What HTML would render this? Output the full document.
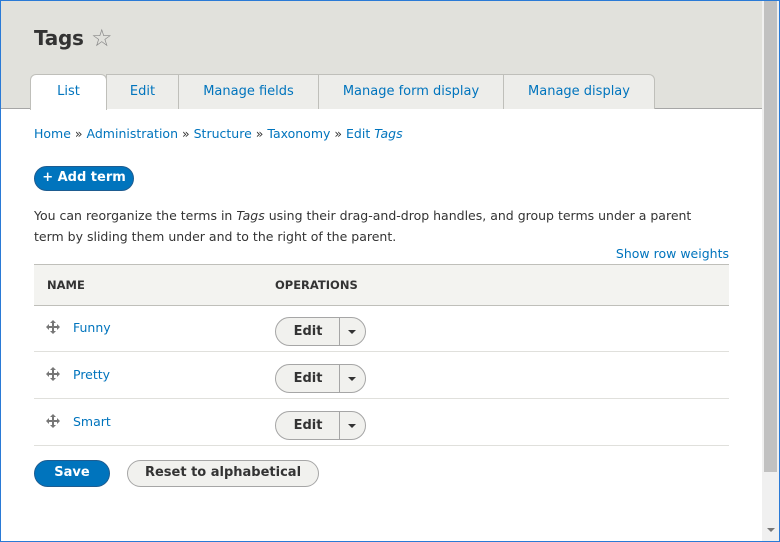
<!DOCTYPE html>
<html><head><meta charset="utf-8"><style>
*{box-sizing:border-box;margin:0;padding:0}
body{width:780px;height:542px;overflow:hidden;font-family:"DejaVu Sans","Liberation Sans",sans-serif;font-size:12px;color:#333;background:#fff;position:relative}
.frame{position:absolute;left:0;top:0;width:780px;height:542px;border:1px solid #2a7ad6;pointer-events:none;z-index:5}
.sb{position:absolute;left:762px;top:0;width:17px;height:542px;background:#f0f0f0}
.thumb{position:absolute;left:764px;top:0;width:13px;height:472px;background:#c1c1c1}
.arrow{position:absolute;left:767px;top:528px;width:0;height:0;border-left:4px solid transparent;border-right:4px solid transparent;border-top:4px solid #777}
.head{position:absolute;left:0;top:0;width:762px;height:109px;background:#e1e1dc;border-bottom:1px solid #a6a6a6}
h1{position:absolute;left:34px;top:26px;font-size:20px;font-weight:bold;color:#333;letter-spacing:-0.3px}
.star{position:absolute;left:91px;top:24px;font-size:24px;color:#888}
.tab{position:absolute;top:74px;height:35px;border:1px solid #bfbfba;border-bottom:none;background:#ededea;color:#0074bd;font-size:13px;text-align:center;line-height:34px}
.tab.a{background:#fff;border-radius:6px 6px 0 0;height:36px;z-index:2}
a{color:#0074bd;text-decoration:none}
.bc{position:absolute;left:34px;top:126px;font-size:12.5px}
.btn{position:absolute;border-radius:14px;font-weight:bold;font-size:13px;text-align:center}
.blue{background:#0074bd;color:#fff;border:1px solid #1e5c90}
.grey{background:#f1f1ee;color:#333;border:1px solid #a6a6a6}
p{position:absolute;left:34px;top:205px;width:685px;line-height:21px;font-size:12.5px}
.srw{position:absolute;right:51px;top:246px;font-size:12.5px}
.th{position:absolute;left:34px;top:264px;width:695px;height:42px;background:#f3f3f0;border-top:1px solid #bfbfba;border-bottom:1px solid #bfbfba;font-weight:bold;font-size:11.5px}
.row{position:absolute;left:34px;width:695px;height:47px;border-bottom:1px solid #e0e0dc}
.drag{position:absolute;left:12px;top:15px}
.nm{position:absolute;left:39px;top:15px;font-size:12.5px}
.db{position:absolute;left:241px;top:12px;width:91px;height:29px;border:1px solid #a6a6a6;border-radius:15px;background:#f1f1ee}
.db b{position:absolute;left:0;width:64px;text-align:center;top:6px;font-size:13px}
.db i{position:absolute;left:63px;top:0;width:1px;height:27px;background:#a6a6a6}
.db s{position:absolute;left:72px;top:12px;border-left:4px solid transparent;border-right:4px solid transparent;border-top:4px solid #333}
</style></head><body>
<div class="head"></div>
<h1>Tags</h1><div class="star">☆</div>
<div class="tab a" style="left:30px;width:77px">List</div>
<div class="tab" style="left:106px;width:73px">Edit</div>
<div class="tab" style="left:178px;width:141px">Manage fields</div>
<div class="tab" style="left:318px;width:186px">Manage form display</div>
<div class="tab" style="left:503px;width:152px;border-radius:0 6px 0 0">Manage display</div>
<div class="bc"><a>Home</a> » <a>Administration</a> » <a>Structure</a> » <a>Taxonomy</a> » <a>Edit <i>Tags</i></a></div>
<div class="btn blue" style="left:34px;top:166px;width:100px;height:25px;line-height:22px">+ Add term</div>
<p>You can reorganize the terms in <i>Tags</i> using their drag-and-drop handles, and group terms under a parent<br>term by sliding them under and to the right of the parent.</p>
<a class="srw">Show row weights</a>
<div class="th"><span style="position:absolute;left:13px;top:13px">NAME</span><span style="position:absolute;left:241px;top:13px">OPERATIONS</span></div>
<div class="row" style="top:305px"><svg class="drag" width="14" height="14" viewBox="0 0 14 14"><path d="M7 0L10 3H8V6H11V4L14 7L11 10V8H8V11H10L7 14L4 11H6V8H3V10L0 7L3 4V6H6V3H4Z" fill="#777"/></svg><a class="nm">Funny</a><div class="db"><b>Edit</b><i></i><s></s></div></div>
<div class="row" style="top:352px"><svg class="drag" width="14" height="14" viewBox="0 0 14 14"><path d="M7 0L10 3H8V6H11V4L14 7L11 10V8H8V11H10L7 14L4 11H6V8H3V10L0 7L3 4V6H6V3H4Z" fill="#777"/></svg><a class="nm">Pretty</a><div class="db"><b>Edit</b><i></i><s></s></div></div>
<div class="row" style="top:399px"><svg class="drag" width="14" height="14" viewBox="0 0 14 14"><path d="M7 0L10 3H8V6H11V4L14 7L11 10V8H8V11H10L7 14L4 11H6V8H3V10L0 7L3 4V6H6V3H4Z" fill="#777"/></svg><a class="nm">Smart</a><div class="db"><b>Edit</b><i></i><s></s></div></div>
<div class="btn blue" style="left:34px;top:460px;width:76px;height:27px;line-height:24px">Save</div>
<div class="btn grey" style="left:127px;top:460px;width:192px;height:27px;line-height:24px">Reset to alphabetical</div>
<div class="sb"></div><div class="thumb"></div><div class="arrow"></div>
<div class="frame"></div>
</body></html>
